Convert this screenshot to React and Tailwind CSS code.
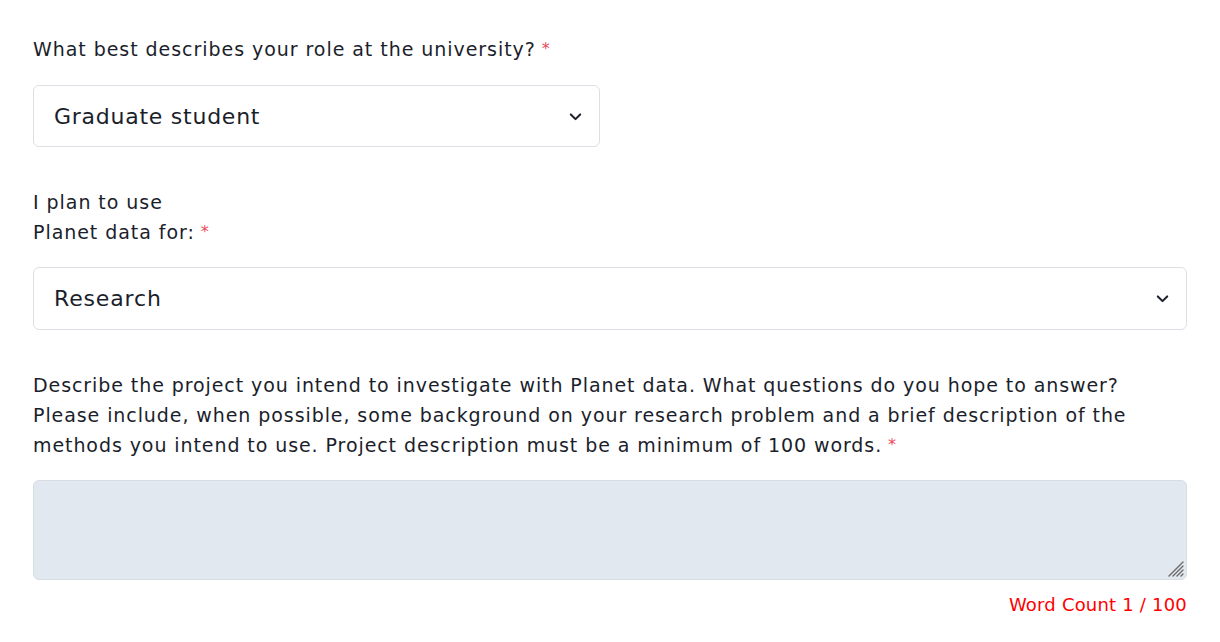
import React from "react";

function Chevron() {
  return (
    <svg width="15" height="15" viewBox="0 0 16 16" fill="none" className="shrink-0">
      <path d="M3 5.8l5 5 5-5" stroke="#1e2130" strokeWidth="2.2" strokeLinecap="round" strokeLinejoin="round" />
    </svg>
  );
}

function Star() {
  return <span className="ml-[6px] text-[16px] tracking-normal align-top text-[#ea4a5a]">*</span>;
}

export default function App() {
  return (
    <div
      className="min-h-[642px] bg-white px-[33px] pt-[34px] text-[#1b1e2b]"
      style={{ fontFamily: '"DejaVu Sans", "Noto Sans", sans-serif' }}
    >
      <div className="text-[19px] leading-[30px] tracking-[0.95px]">
        What best describes your role at the university?<Star />
      </div>
      <div className="mt-[21px] flex h-[62px] w-[567px] items-center justify-between rounded-[6px] border border-[#dcdfe3] pl-[20px] pr-[16px] text-[22px] tracking-[0.75px]">
        <span>Graduate student</span>
        <Chevron />
      </div>

      <div className="mt-[40px] text-[19px] leading-[30px] tracking-[0.95px]">
        I plan to use
        <br />
        Planet data for:<Star />
      </div>
      <div className="mt-[20px] flex h-[63px] w-full items-center justify-between rounded-[6px] border border-[#dcdfe3] pl-[20px] pr-[16px] text-[22px] tracking-[0.85px]">
        <span>Research</span>
        <Chevron />
      </div>

      <div className="mt-[40px] text-[19px] leading-[30px] tracking-[0.92px] whitespace-nowrap">
        Describe the project you intend to investigate with Planet data. What questions do you hope to answer?
        <br />
        Please include, when possible, some background on your research problem and a brief description of the
        <br />
        methods you intend to use. Project description must be a minimum of 100 words.<Star />
      </div>
      <div className="relative mt-[20px]">
        <textarea className="block h-[100px] w-full resize-none rounded-[6px] border border-[#d8dde4] bg-[#e2e8f0] outline-none" />
        <svg
          width="18"
          height="18"
          viewBox="0 0 18 18"
          className="pointer-events-none absolute bottom-[2px] right-[2px]"
        >
          <path
            d="M2 16L16 2M6 16L16 6M10 16L16 10M14 16L16 14"
            stroke="#6b6b6b"
            strokeWidth="1.4"
            strokeLinecap="round"
          />
        </svg>
      </div>
      <div className="mt-[13px] text-right text-[18px] leading-[24px] tracking-[0.2px] text-[#ff0000]">Word Count 1 / 100</div>
    </div>
  );
}
